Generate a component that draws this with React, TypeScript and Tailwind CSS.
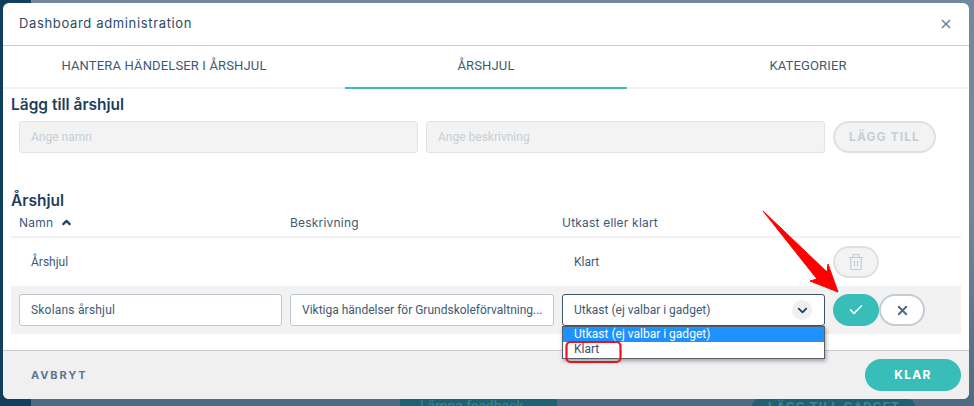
import { Check, ChevronDown, ChevronUp, Trash2, X } from "lucide-react";

const HEADING_FONT = "font-['Inter','Noto_Sans',sans-serif]";

function Backdrop() {
  return (
    <div className="absolute inset-0 flex overflow-hidden bg-[#6f889c]">
      <div className="w-[31px] shrink-0 bg-[#133f5f]" />
      <div className="flex flex-1 flex-col justify-between bg-gradient-to-b from-[#72899d] via-[#6f889c] to-[#4f6b81]">
        <div className="-mt-[12px] flex gap-[17px] pl-[39px] text-[14px] leading-[14px] tracking-[0.3px] text-[#1f4d6b]">
          <span className="text-[#1f7f88]">MITT ARBETE</span>
          <span>DID-BOARD</span>
          <span>MEETINGS</span>
        </div>
        <div className="flex h-[7px] items-start overflow-hidden">
          <span className="ml-[369px] h-[7px] w-[157px] bg-[#1f6172] pl-5 text-[14px] leading-[14px] text-[#3f8494]">Lämna feedback</span>
          <span className="ml-[195px] h-[7px] w-[163px] rounded-t-full bg-[#1f6172] pl-4 text-[13px] leading-[16px] font-bold tracking-[1px] text-[#3f8494]">LÄGG TILL GADGET</span>
        </div>
      </div>
    </div>
  );
}

function Tabs() {
  const tabs = ["HANTERA HÄNDELSER I ÅRSHJUL", "ÅRSHJUL", "KATEGORIER"];
  return (
    <div className="flex h-[43px] border-b-2 border-[#f2f2f2]">
      {tabs.map((tab, i) => (
        <div key={tab} className="relative flex flex-1 items-center justify-center pb-[2px] text-[13px] tracking-[0.15px] text-[#3d5a75]">
          {tab}
          {i === 1 && <span className="absolute inset-x-5 -bottom-[2px] h-[2px] bg-[#38bdb8]" />}
        </div>
      ))}
    </div>
  );
}

function SectionTitle({ children }: { children: string }) {
  return <h2 className={`${HEADING_FONT} text-[15.5px] leading-[20px] font-semibold text-[#1f3f5c]`}>{children}</h2>;
}

function AddForm() {
  return (
    <div className="mt-[6px] flex gap-2 pl-2">
      <input disabled placeholder="Ange namn" className="h-8 w-[399px] rounded-[3px] border border-[#e3e3e3] bg-[#f3f3f3] px-[11px] text-[12px] placeholder:text-[#c6ced6]" />
      <input disabled placeholder="Ange beskrivning" className="h-8 w-[399px] rounded-[3px] border border-[#e3e3e3] bg-[#f3f3f3] px-[11px] text-[12px] placeholder:text-[#c6ced6]" />
      <button className={`${HEADING_FONT} h-8 w-[103px] rounded-full border-2 border-[#e0e0e0] bg-[#f3f3f3] text-[12px] font-bold tracking-[1.1px] text-[#c6ced6]`}>
        LÄGG TILL
      </button>
    </div>
  );
}

function EditRow() {
  return (
    <div className="flex h-12 items-center gap-2 bg-[#f2f2f2] pl-2">
      <input readOnly value="Skolans årshjul" className="h-8 w-[263px] rounded-[3px] border border-[#bcc7d1] bg-white px-[11px] text-[12px] tracking-[0.2px] text-[#3d5a75]" />
      <input readOnly value="Viktiga händelser för Grundskoleförvaltning..." className="h-8 w-[264px] rounded-[3px] border border-[#bcc7d1] bg-white pl-[11px] pr-1 text-[12px] text-[#3d5a75]" />
      <div className="relative h-8 w-[263px]">
        <div className="flex h-8 items-center justify-between rounded-[3px] border border-[#3d5468] bg-white pl-[11px] pr-[12px] text-[12px] text-[#3d5a75]">
          Utkast (ej valbar i gadget)
          <span className="flex size-5 items-center justify-center rounded-full bg-[#eef0f1]">
            <ChevronDown size={15} strokeWidth={3} className="text-[#24445f]" />
          </span>
        </div>
        <div className="absolute inset-x-0 top-8 z-10 border border-[#55606a] bg-white text-[12px] leading-[15px] shadow-[1px_2px_4px_rgba(0,0,0,0.35)]">
          <div className="h-[15px] bg-[#1e90ff] pl-[11px] text-white">Utkast (ej valbar i gadget)</div>
          <div className="h-[16px] pl-[11px] text-[#3d4d5c]">Klart</div>
        </div>
      </div>
      <div className="flex">
        <button className="flex h-8 w-[46px] items-center justify-center rounded-full bg-[#38bdb8] text-white">
          <Check size={16} strokeWidth={2.5} />
        </button>
        <button className="flex h-8 w-[46px] items-center justify-center rounded-full border-2 border-[#c2ccd5] bg-white text-[#4d6983]">
          <X size={15} strokeWidth={3} />
        </button>
      </div>
    </div>
  );
}

function Annotations() {
  return (
    <svg className="pointer-events-none absolute inset-0 z-20" width={974} height={406} viewBox="0 0 974 406">
      <polygon points="763,211 827,272 828,264 838,292 810,281 817,279" fill="#ff0000" stroke="#ff0000" strokeWidth="1" strokeLinejoin="round" />
      <rect x="566.5" y="342" width="54" height="20" rx="4" fill="none" stroke="#e8141c" strokeWidth="2.2" />
    </svg>
  );
}

export default function App() {
  return (
    <div className="relative h-[406px] w-[974px] overflow-hidden font-['Roboto',sans-serif]">
      <Backdrop />
      <div className="absolute left-[3px] top-[3px] flex h-[396px] w-[966px] flex-col overflow-hidden rounded-[6px] bg-white">
        <header className="flex h-[43px] shrink-0 items-center justify-between border-b border-[#cccccc] pl-4 pr-[16px]">
          <span className={`${HEADING_FONT} text-[13px] tracking-[0.65px] text-[#2c4a66]`}>Dashboard administration</span>
          <X size={14} strokeWidth={3} className="text-[#75889a]" />
        </header>
        <Tabs />
        <div className="flex-1 px-2">
          <div className="pt-[6px]">
            <SectionTitle>Lägg till årshjul</SectionTitle>
          </div>
          <AddForm />
          <div className="mt-[38px]">
            <SectionTitle>Årshjul</SectionTitle>
          </div>
          <div className={`${HEADING_FONT} flex h-[27px] items-center border-b-2 border-[#f2f2f2] pb-[2px] pl-2 text-[12px] tracking-[0.2px] text-[#3d5a75]`}>
            <span className="flex w-[271px] items-center gap-[7px]">
              Namn <ChevronUp size={13} strokeWidth={4} className="text-[#24445f]" />
            </span>
            <span className="w-[272px]">Beskrivning</span>
            <span>Utkast eller klart</span>
          </div>
          <div className="flex h-[48px] items-center gap-2 pl-2 text-[12px] text-[#3d5a75]">
            <span className="w-[263px] pl-3">Årshjul</span>
            <span className="w-[264px]" />
            <span className="w-[263px] pl-3">Klart</span>
            <button className="flex h-8 w-[46px] items-center justify-center rounded-full border-2 border-[#e0e0e0] bg-[#f3f3f3] text-[#c0cad3]">
              <Trash2 size={18} strokeWidth={1.5} />
            </button>
          </div>
          <EditRow />
        </div>
        <footer className="flex h-[49px] shrink-0 items-center justify-between border-t border-[#cccccc] bg-[#f0f0f0] pl-7 pr-2">
          <span className={`${HEADING_FONT} text-[11px] font-bold tracking-[1.9px] text-[#5c7690]`}>AVBRYT</span>
          <button className={`${HEADING_FONT} h-8 w-24 rounded-full bg-[#38bdb8] text-[12px] font-bold tracking-[1.3px] text-white`}>KLAR</button>
        </footer>
      </div>
      <Annotations />
    </div>
  );
}
